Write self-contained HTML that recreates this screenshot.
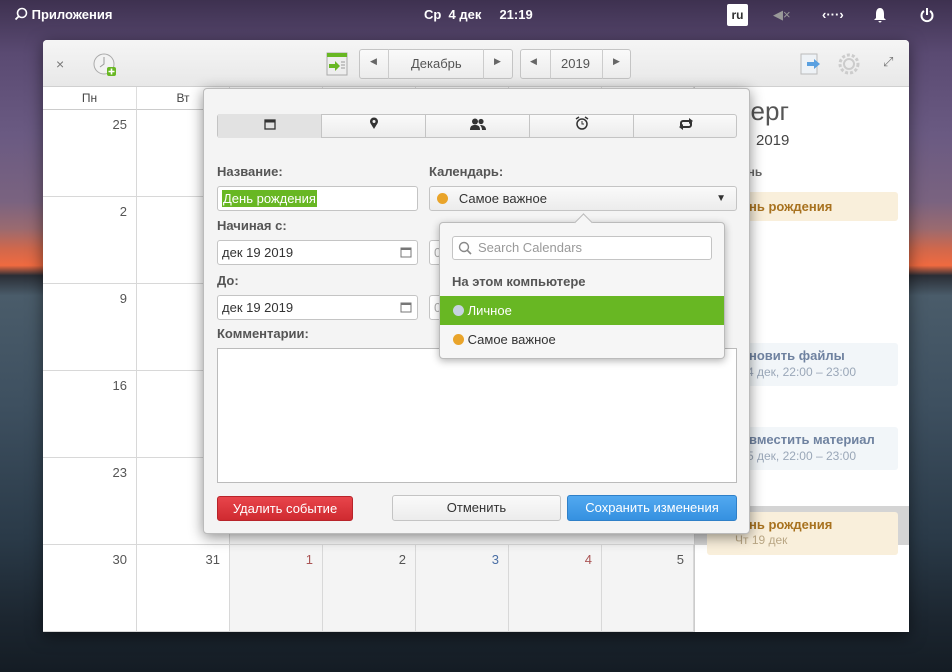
<!DOCTYPE html>
<html><head><meta charset="utf-8">
<style>
*{box-sizing:border-box;margin:0;padding:0}
body{width:952px;height:672px;overflow:hidden;position:relative;font-family:"Liberation Sans","DejaVu Sans",sans-serif;font-size:13px;color:#333;
background:linear-gradient(180deg,#3e3150 0%,#5a4a72 8%,#6a5a82 20%,#7a6380 30%,#9a6a70 34%,#d0684c 37%,#f06a40 39.5%,#2a2e36 41%,#4a5c6a 44%,#3e5060 60%,#2a3a48 80%,#1c2630 92%,#141c24 100%);}
.abs{position:absolute}
.top{left:0;top:0;width:952px;height:30px;color:#fff;font-weight:bold;font-size:13px}
.win{left:43px;top:40px;width:866px;height:592px;background:#fff;border-radius:4px 4px 0 0;overflow:hidden;box-shadow:0 4px 16px rgba(0,0,0,.5)}
.hdr{left:0;top:0;width:866px;height:47px;background:linear-gradient(#f5f5f5,#e8e8e8);border-bottom:1px solid #d0d0d0}
.btn{border:1px solid #c4c4c4;border-radius:3px;background:linear-gradient(#fafafa,#ececec);color:#444;text-align:center}
.colh{top:47px;height:23px;border-right:1px solid #ddd;border-bottom:1px solid #ccc;text-align:center;line-height:23px;font-size:12px;color:#444}
.cell{border-right:1px solid #d8d8d8;border-bottom:1px solid #d8d8d8;text-align:right;padding:7px 9px 0 0;font-size:13px;color:#555}
.dlg{left:203px;top:88px;width:547px;height:446px;background:#f4f4f4;border-radius:4px;box-shadow:0 3px 14px rgba(0,0,0,.45);border:1px solid #bbb}
.lbl{font-weight:bold;color:#555;font-size:13px}
.inp{background:#fff;border:1px solid #c4c4c4;border-radius:3px;height:25px;line-height:23px;padding-left:4px;font-size:13px;color:#333}
.tab{top:25px;height:24px;border-right:1px solid #c4c4c4;text-align:center;line-height:24px}
.dot{display:inline-block;width:11px;height:11px;border-radius:50%;vertical-align:-1px}
</style></head><body>
<div class="abs top">
 <div class="abs" style="left:14px;top:7px;">
  <svg width="14" height="14" viewBox="0 0 14 14" style="vertical-align:-2px"><circle cx="8" cy="6" r="4.5" stroke="#fff" stroke-width="1.6" fill="none"/><path d="M4.8 9.2 1.5 12.5" stroke="#fff" stroke-width="1.8"/></svg> Приложения</div>
 <div class="abs" style="left:424px;top:7px;">Ср&nbsp; 4 дек&nbsp;&nbsp;&nbsp;&nbsp; 21:19</div>
 <div class="abs" style="left:727px;top:4px;width:21px;height:22px;background:#fff;color:#333;border-radius:2px;text-align:center;line-height:22px;font-size:12px">ru</div>
 <div class="abs" style="left:773px;top:7px;color:#999;font-weight:normal">◀×</div>
 <div class="abs" style="left:822px;top:7px;">‹···›</div>
 <div class="abs" style="left:873px;top:7px;"><svg width="14" height="16"><path d="M7 1C4 1 3 4 3 7v4L1 13h12l-2-2V7c0-3-1-6-4-6z M5.5 14h3a1.5 1.5 0 0 1-3 0z" fill="#fff"/></svg></div>
 <div class="abs" style="left:920px;top:7px;"><svg width="14" height="16"><path d="M4 4a5.5 5.5 0 1 0 6 0" stroke="#fff" stroke-width="2" fill="none"/><path d="M7 1v7" stroke="#fff" stroke-width="2"/></svg></div>
</div>

<div class="abs win">
 <div class="abs hdr">
  <div class="abs" style="left:13px;top:16px;color:#777;font-size:14px">×</div>
  <svg class="abs" style="left:49px;top:12px" width="26" height="26"><circle cx="12" cy="12" r="10" fill="#f2f2f2" stroke="#aaa"/><path d="M12 5v7l-4 3" stroke="#999" fill="none"/><rect x="15" y="15" width="9" height="9" rx="2" fill="#68b723"/><path d="M19.5 16.5v6M16.5 19.5h6" stroke="#fff" stroke-width="1.6"/></svg>
  <svg class="abs" style="left:283px;top:12px" width="22" height="24"><rect x="1" y="1" width="20" height="22" fill="#eee" stroke="#aaa"/><rect x="1" y="1" width="20" height="4" fill="#68b723"/><path d="M3 12h6V9l5 5-5 5v-3H3z" fill="#68b723"/><path d="M15 10h4M15 13h4M15 16h4" stroke="#999"/></svg>
  <div class="abs btn" style="left:316px;top:9px;width:154px;height:30px;"></div>
  <div class="abs" style="left:345px;top:9px;width:1px;height:30px;background:#ccc"></div>
  <div class="abs" style="left:440px;top:9px;width:1px;height:30px;background:#ccc"></div>
  <div class="abs" style="left:327px;top:16px;font-size:9px;color:#666">◀</div>
  <div class="abs" style="left:368px;top:16px;color:#555">Декабрь</div>
  <div class="abs" style="left:451px;top:16px;font-size:9px;color:#666">▶</div>
  <div class="abs btn" style="left:477px;top:9px;width:111px;height:30px;"></div>
  <div class="abs" style="left:507px;top:9px;width:1px;height:30px;background:#ccc"></div>
  <div class="abs" style="left:559px;top:9px;width:1px;height:30px;background:#ccc"></div>
  <div class="abs" style="left:487px;top:16px;font-size:9px;color:#666">◀</div>
  <div class="abs" style="left:518px;top:16px;color:#555">2019</div>
  <div class="abs" style="left:570px;top:16px;font-size:9px;color:#666">▶</div>
  <svg class="abs" style="left:757px;top:12px" width="24" height="24"><rect x="1" y="2" width="16" height="20" fill="#eef2f6" stroke="#bbb"/><path d="M7 10h7V7l6 5-6 5v-3H7z" fill="#5aa0e0"/></svg>
  <svg class="abs" style="left:794px;top:12px" width="24" height="24"><circle cx="12" cy="12" r="9" fill="none" stroke="#ccc" stroke-width="3" stroke-dasharray="3 2"/><circle cx="12" cy="12" r="5" fill="none" stroke="#ccc" stroke-width="2"/></svg>
  <div class="abs" style="left:840px;top:14px;color:#777;font-size:13px">⤢</div>
 </div>
 <div class="abs colh" style="left:0;width:94px">Пн</div>
 <div class="abs colh" style="left:94px;width:93px">Вт</div>
 <div class="abs colh" style="left:187px;width:93px"></div>
 <div class="abs colh" style="left:280px;width:93px"></div>
 <div class="abs colh" style="left:373px;width:93px"></div>
 <div class="abs colh" style="left:466px;width:93px"></div>
 <div class="abs colh" style="left:559px;width:92px"></div>
 <div class="abs" style="left:0;top:70px;width:651px;height:522px;">
  <div class="abs cell" style="left:0;top:0;width:94px;height:87px">25</div>
  <div class="abs cell" style="left:94px;top:0;width:93px;height:87px"></div>
  <div class="abs cell" style="left:0;top:87px;width:94px;height:87px">2</div>
  <div class="abs cell" style="left:94px;top:87px;width:93px;height:87px"></div>
  <div class="abs cell" style="left:0;top:174px;width:94px;height:87px">9</div>
  <div class="abs cell" style="left:94px;top:174px;width:93px;height:87px"></div>
  <div class="abs cell" style="left:0;top:261px;width:94px;height:87px">16</div>
  <div class="abs cell" style="left:94px;top:261px;width:93px;height:87px"></div>
  <div class="abs cell" style="left:0;top:348px;width:94px;height:87px">23</div>
  <div class="abs cell" style="left:94px;top:348px;width:93px;height:87px"></div>
  <div class="abs cell" style="left:0;top:435px;width:94px;height:87px">30</div>
  <div class="abs cell" style="left:94px;top:435px;width:93px;height:87px">31</div>
  <div class="abs cell" style="left:187px;top:435px;width:93px;height:87px;background:#f4f4f4;color:#a55">1</div>
  <div class="abs cell" style="left:280px;top:435px;width:93px;height:87px;background:#f4f4f4">2</div>
  <div class="abs cell" style="left:373px;top:435px;width:93px;height:87px;background:#f4f4f4;color:#4a6fa5">3</div>
  <div class="abs cell" style="left:466px;top:435px;width:93px;height:87px;background:#f4f4f4;color:#a55">4</div>
  <div class="abs cell" style="left:559px;top:435px;width:92px;height:87px;background:#f4f4f4">5</div>
  <div class="abs" style="left:187px;top:348px;width:464px;height:87px;background:#f6f6f6;border-bottom:1px solid #d8d8d8"></div>
 </div>
 <div class="abs" style="left:651px;top:47px;width:215px;height:545px;border-left:1px solid #ccc;background:#fff">
  <div class="abs" style="left:42px;top:9px;font-size:26px;color:#555;font-weight:300">верг</div>
  <div class="abs" style="left:61px;top:45px;font-size:15px;color:#444">2019</div>
  <div class="abs" style="left:46px;top:78px;font-size:12px;color:#666;font-weight:bold">ень</div>
  <div class="abs" style="left:12px;top:105px;width:191px;height:29px;background:#f9efdb;border-radius:3px;color:#a8721f;font-weight:bold;padding:7px 0 0 42px">нь рождения</div>
  <div class="abs" style="left:42px;top:206px;font-size:12px;color:#4a6fa5">ı</div>
  <div class="abs" style="left:12px;top:256px;width:191px;height:43px;background:#f2f6f9;border-radius:3px;padding:5px 0 0 42px"><div style="color:#6f82a0;font-weight:bold">новить файлы</div><div style="color:#9aa7b8;font-size:12px;margin-top:2px;margin-left:-2px">4 дек, 22:00 – 23:00</div></div>
  <div class="abs" style="left:42px;top:312px;font-size:12px;color:#555;font-weight:bold">ı</div>
  <div class="abs" style="left:12px;top:340px;width:191px;height:43px;background:#f2f6f9;border-radius:3px;padding:5px 0 0 42px"><div style="color:#6f82a0;font-weight:bold">вместить материал</div><div style="color:#9aa7b8;font-size:12px;margin-top:2px;margin-left:-2px">5 дек, 22:00 – 23:00</div></div>
  <div class="abs" style="left:0;top:419px;width:215px;height:39px;background:#d4d4d4"></div>
  <div class="abs" style="left:12px;top:425px;width:191px;height:43px;background:#f9efdb;border-radius:3px;padding:5px 0 0 42px"><div style="color:#a8721f;font-weight:bold">нь рождения</div><div style="color:#b9a684;font-size:12px;margin-top:1px;margin-left:-14px">Чт 19 дек</div></div>
 </div>
</div>

<div class="abs dlg">
 <div class="abs btn" style="left:13px;top:25px;width:520px;height:24px;"></div>
 <div class="abs tab" style="left:14px;width:104px;background:#e2e2e2"><svg width="12" height="12"><rect x="1" y="2" width="10" height="9" fill="none" stroke="#333" stroke-width="1.3"/><rect x="1" y="2" width="10" height="2.5" fill="#333"/></svg></div>
 <div class="abs tab" style="left:118px;width:104px"><svg width="10" height="13"><path d="M5 12C2 7 1 6 1 4.5a4 4 0 0 1 8 0C9 6 8 7 5 12z" fill="#333"/><circle cx="5" cy="4.5" r="1.5" fill="#f4f4f4"/></svg></div>
 <div class="abs tab" style="left:222px;width:104px"><svg width="16" height="12"><circle cx="5" cy="3.5" r="3" fill="#333"/><path d="M0 12c0-4 2-5 5-5s5 1 5 5z" fill="#333"/><circle cx="11" cy="3.5" r="2.6" fill="#333"/><path d="M10 7c3 0 6 1 6 5h-4c0-2-1-4-2-5z" fill="#333"/></svg></div>
 <div class="abs tab" style="left:326px;width:104px"><svg width="14" height="14"><circle cx="7" cy="8" r="5" fill="none" stroke="#333" stroke-width="1.5"/><path d="M7 5v3h2" stroke="#333" fill="none"/><path d="M1 3l3-2M13 3l-3-2" stroke="#333" stroke-width="1.5"/></svg></div>
 <div class="abs tab" style="left:430px;width:103px;border-right:none"><svg width="16" height="12"><path d="M3 8V5a2 2 0 0 1 2-2h7M13 4v3a2 2 0 0 1-2 2H4" stroke="#333" stroke-width="2" fill="none"/><path d="M11 0l4 3-4 3zM5 6l-4 3 4 3z" fill="#333"/></svg></div>

 <div class="abs lbl" style="left:13px;top:75px">Название:</div>
 <div class="abs lbl" style="left:225px;top:75px">Календарь:</div>
 <div class="abs inp" style="left:13px;top:97px;width:201px"><span style="background:#68b723;color:#fff;padding:1px 1px">День рождения</span></div>
 <div class="abs btn" style="left:225px;top:97px;width:308px;height:25px;text-align:left;line-height:23px;padding-left:7px;color:#333"><span class="dot" style="background:#e9a42a"></span>&nbsp;&nbsp; Самое важное<span style="position:absolute;right:10px;font-size:10px">▼</span></div>
 <div class="abs lbl" style="left:13px;top:129px">Начиная с:</div>
 <div class="abs inp" style="left:13px;top:151px;width:201px">дек 19 2019<svg style="position:absolute;right:5px;top:5px" width="12" height="12"><rect x="1" y="2" width="10" height="9" fill="none" stroke="#777"/><rect x="1" y="2" width="10" height="2" fill="#777"/></svg></div>
 <div class="abs inp" style="left:225px;top:151px;width:20px;color:#aaa">0</div>
 <div class="abs lbl" style="left:13px;top:184px">До:</div>
 <div class="abs inp" style="left:13px;top:206px;width:201px">дек 19 2019<svg style="position:absolute;right:5px;top:5px" width="12" height="12"><rect x="1" y="2" width="10" height="9" fill="none" stroke="#777"/><rect x="1" y="2" width="10" height="2" fill="#777"/></svg></div>
 <div class="abs inp" style="left:225px;top:206px;width:20px;color:#aaa">0</div>
 <div class="abs lbl" style="left:13px;top:237px">Комментарии:</div>
 <div class="abs" style="left:13px;top:259px;width:520px;height:135px;background:#fff;border:1px solid #bbb"></div>
 <div class="abs" style="left:13px;top:407px;width:136px;height:25px;background:linear-gradient(#e8454b,#cf2a30);border:1px solid #b8242a;border-radius:3px;color:#fff;text-align:center;line-height:23px">Удалить событие</div>
 <div class="abs btn" style="left:188px;top:406px;width:169px;height:26px;line-height:24px;color:#333">Отменить</div>
 <div class="abs" style="left:363px;top:406px;width:170px;height:26px;background:linear-gradient(#52a9f0,#3591e0);border:1px solid #2f80c8;border-radius:3px;color:#fff;text-align:center;line-height:24px">Сохранить изменения</div>
</div>

<div class="abs" style="left:439px;top:222px;width:286px;height:137px;background:#f6f6f6;border:1px solid #bbb;border-radius:4px;box-shadow:0 2px 8px rgba(0,0,0,.3)">
 <div class="abs" style="left:137px;top:-7px;width:13px;height:13px;background:#f6f6f6;border-left:1px solid #bbb;border-top:1px solid #bbb;transform:rotate(45deg)"></div>
 <div class="abs" style="left:12px;top:13px;width:260px;height:24px;background:#fff;border:1px solid #c4c4c4;border-radius:3px;color:#999;line-height:22px;padding-left:25px">Search Calendars
  <svg style="position:absolute;left:5px;top:4px" width="14" height="14"><circle cx="6" cy="6" r="4.5" fill="none" stroke="#888" stroke-width="1.4"/><path d="M9.3 9.3 13 13" stroke="#888" stroke-width="1.6"/></svg></div>
 <div class="abs lbl" style="left:12px;top:51px">На этом компьютере</div>
 <div class="abs" style="left:0;top:73px;width:284px;height:29px;background:#68b723;color:#fff;line-height:29px;padding-left:13px"><span class="dot" style="background:#c7d3e0"></span> Личное</div>
 <div class="abs" style="left:0;top:102px;width:284px;height:29px;color:#333;line-height:29px;padding-left:13px"><span class="dot" style="background:#e9a42a"></span> Самое важное</div>
</div>
</body></html>
